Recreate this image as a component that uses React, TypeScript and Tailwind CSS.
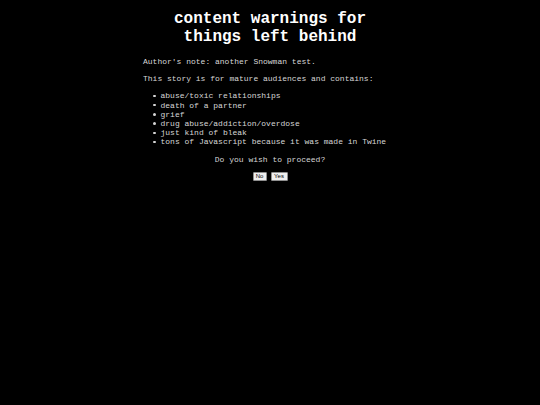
export default function App() {
  const warnings = [
    "abuse/toxic relationships",
    "death of a partner",
    "grief",
    "drug abuse/addiction/overdose",
    "just kind of bleak",
    "tons of Javascript because it was made in Twine",
  ];
  return (
    <div className="min-h-[405px] w-full bg-black text-white font-['Courier_New','Courier','Liberation_Mono',monospace]">
      <div className="mx-auto w-[254px] pt-[10px]">
        <h1 className="text-center text-[16px] leading-[18px] font-bold text-white">
          content warnings for
          <br />
          things left behind
        </h1>
        <div className="mt-[11px] text-[8px] leading-[9.2px] text-[#d6d6d6]">
          <p>Author's note: another Snowman test.</p>
          <p className="mt-[8px]">This story is for mature audiences and contains:</p>
          <ul className="mt-[8px] whitespace-nowrap">
            {warnings.map((w) => (
              <li key={w} className="flex items-center">
                <span className="ml-[10px] mr-[5px] h-[2.5px] w-[2.5px] rounded-full bg-[#d6d6d6]" />
                <span>{w}</span>
              </li>
            ))}
          </ul>
          <p className="mt-[8px] text-center">Do you wish to proceed?</p>
          <div className="mt-[8px] flex justify-center gap-[4px] font-['Liberation_Sans',sans-serif]">
            <button className="h-[9px] w-[14px] bg-[#efefef] border border-[#8f8f8f] rounded-[1px] text-black text-[6px] leading-[7px]">
              No
            </button>
            <button className="h-[9px] w-[17px] bg-[#efefef] border border-[#8f8f8f] rounded-[1px] text-black text-[6px] leading-[7px]">
              Yes
            </button>
          </div>
        </div>
      </div>
    </div>
  );
}
